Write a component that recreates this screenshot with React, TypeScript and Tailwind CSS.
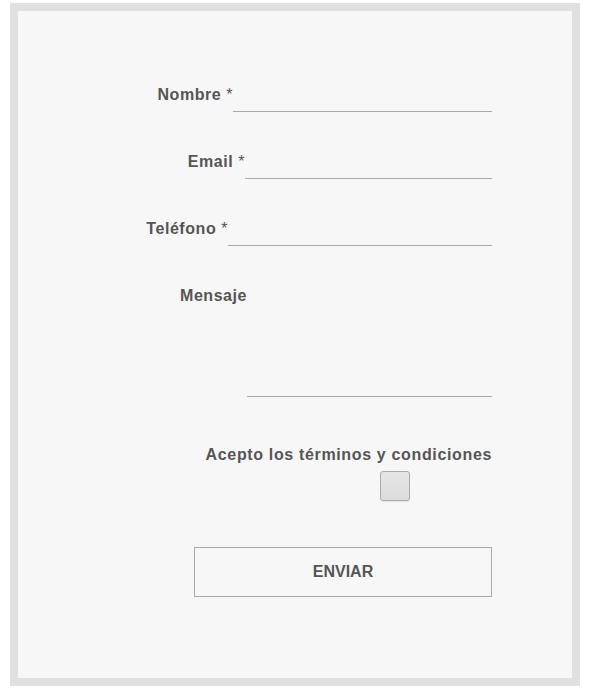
import React from 'react';

const fields = [
  { label: 'Nombre', required: true, width: 'w-[259px]', type: 'text' },
  { label: 'Email', required: true, width: 'w-[247px]', type: 'email' },
  { label: 'Teléfono', required: true, width: 'w-[264px]', type: 'tel' },
];

const App = () => {
  return (
    <div className="pt-[3px] pl-[10px] font-['Liberation_Sans',Arial,sans-serif] text-[#555]">
      <div className="w-[570px] h-[683px] border-[8px] border-[#e0e0e0] bg-[#f7f7f7] pr-[80px] pt-[71px]">
        <form className="flex flex-col items-end" onSubmit={(e) => e.preventDefault()}>
          {/* text inputs */}
          {fields.map((f, i) => (
            <div key={f.label} className={`flex items-end justify-end h-[30px] ${i > 0 ? 'mt-[37px]' : ''}`}>
              <label className="text-[16px] leading-[18px] font-bold tracking-[0.55px] pb-[8px] whitespace-nowrap">
                {f.label}
                {f.required && <span className="font-normal"> *</span>}
              </label>
              <input
                type={f.type}
                className={`${f.width} h-[30px] bg-transparent border-0 border-b border-[#aaa] outline-none`}
              />
            </div>
          ))}

          {/* message */}
          <div className="flex items-start justify-end mt-[39px]">
            <label className="pt-[2px] text-[16px] leading-[18px] font-bold tracking-[0.55px] whitespace-nowrap">Mensaje</label>
            <textarea className="w-[245px] h-[112px] bg-transparent border-0 border-b border-[#aaa] outline-none resize-none" />
          </div>

          {/* terms */}
          <label className="mt-[49px] text-[16px] leading-[18px] font-bold tracking-[0.65px] whitespace-nowrap">
            Acepto los términos y condiciones
          </label>
          <div className="mt-[7px] mr-[82px]">
            <button
              type="button"
              aria-label="Acepto"
              className="block w-[30px] h-[30px] rounded-[3px] border border-[#aaa] bg-gradient-to-b from-[#e6e6e6] to-[#dcdcdc] shadow-[0_1px_1px_rgba(0,0,0,0.08)]"
            />
          </div>

          <button
            type="submit"
            className="mt-[46px] w-[298px] h-[50px] border border-[#aaa] bg-transparent text-[16px] font-bold text-[#555]"
          >
            ENVIAR
          </button>
        </form>
      </div>
    </div>
  );
};

export default App;
